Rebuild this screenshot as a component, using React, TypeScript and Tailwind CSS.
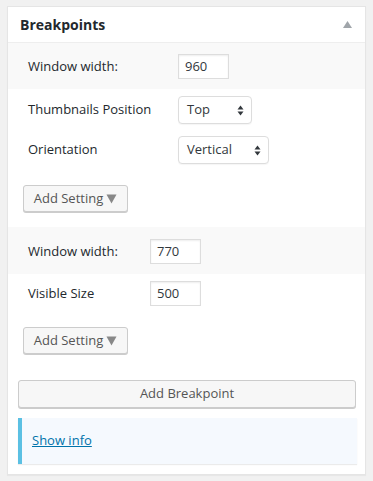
import React from "react";

const font = { fontFamily: '"Open Sans", "Noto Sans", sans-serif' };

const UpDown: React.FC = () => (
  <svg width="7" height="11" viewBox="0 0 7 11" className="shrink-0">
    <path d="M3.5 0.5 L6.5 4.5 H0.5 Z" fill="#32373c" />
    <path d="M3.5 10.5 L6.5 6.5 H0.5 Z" fill="#32373c" />
  </svg>
);

const TextBox: React.FC<{ value: string }> = ({ value }) => (
  <div className="w-[51px] h-[25px] border border-[#dddddd] bg-white shadow-[inset_0_1px_2px_rgba(0,0,0,0.07)] pl-[6px] flex items-center text-[13px] text-[#32373c]">
    {value}
  </div>
);

const SelectBox: React.FC<{ value: string; width: string }> = ({ value, width }) => (
  <div
    className={`${width} h-[28px] border border-[#dddddd] rounded-[4px] bg-white shadow-[0_1px_1px_rgba(0,0,0,0.04)] pl-[8px] pr-[7px] flex items-center justify-between text-[13px] text-[#32373c]`}
  >
    <span>{value}</span>
    <UpDown />
  </div>
);

const AddSetting: React.FC = () => (
  <div className="ml-[15px] w-[105px] h-[27px] border border-[#cccccc] rounded-[3px] bg-[#f7f7f7] shadow-[0_1px_0_#cccccc] flex items-center justify-center gap-[3px] text-[13px] text-[#555555]">
    <span>Add Setting</span>
    <svg width="11" height="10" viewBox="0 0 11 10">
      <path d="M0.5 0.5 H10.5 L5.5 9.5 Z" fill="#888888" />
    </svg>
  </div>
);

const Row: React.FC<{ label: string; labelW: string; children: React.ReactNode }> = ({ label, labelW, children }) => (
  <div className="flex items-center">
    <div className={`${labelW} pl-[20px] text-[13px] text-[#23282d]`}>{label}</div>
    {children}
  </div>
);

export default function App() {
  return (
    <div className="min-h-[481px] bg-[#f1f1f1] pt-[6px] pl-[7px]" style={font}>
      <div className="w-[359px] h-[469px] border border-[#e5e5e5] bg-white shadow-[0_1px_1px_rgba(0,0,0,0.04)]">
        <div className="h-[36px] border-b border-[#eeeeee] flex items-center justify-between pl-[12px] pr-[12px]">
          <span className="text-[14px] font-bold text-[#23282d]">Breakpoints</span>
          <svg width="9" height="7" viewBox="0 0 9 7" className="mr-[1px]">
            <path d="M4.5 0 L9 7 H0 Z" fill="#a0a5aa" />
          </svg>
        </div>

        <div className="bg-[#f9f9f9] pt-[11px] pb-[10px]">
          <Row label="Window width:" labelW="w-[170px]">
            <TextBox value="960" />
          </Row>
        </div>
        <div className="pt-[7px] flex flex-col gap-[12px]">
          <Row label="Thumbnails Position" labelW="w-[170px]">
            <SelectBox value="Top" width="w-[74px]" />
          </Row>
          <Row label="Orientation" labelW="w-[170px]">
            <SelectBox value="Vertical" width="w-[91px]" />
          </Row>
        </div>
        <div className="pt-[21px] pb-[15px]">
          <AddSetting />
        </div>

        <div className="bg-[#f9f9f9] pt-[12px] pb-[10px]">
          <Row label="Window width:" labelW="w-[142px]">
            <TextBox value="770" />
          </Row>
        </div>
        <div className="pt-[7px]">
          <Row label="Visible Size" labelW="w-[142px]">
            <TextBox value="500" />
          </Row>
        </div>
        <div className="pt-[21px]">
          <AddSetting />
        </div>

        <div className="pt-[26px] px-[10px] pr-[9px]">
          <div className="h-[28px] border border-[#cccccc] rounded-[3px] bg-[#f7f7f7] shadow-[0_1px_0_#cccccc] flex items-center justify-center text-[13px] text-[#555555]">
            Add Breakpoint
          </div>
        </div>

        <div className="pt-[10px] pl-[10px] pr-[8px]">
          <div className="h-[46px] border-l-4 border-[#5bc0e3] bg-[#f5f9fe] shadow-[0_1px_1px_rgba(0,0,0,0.08)] flex items-center pl-[10px]">
            <a className="text-[13px] text-[#0073aa] underline">Show info</a>
          </div>
        </div>
      </div>
    </div>
  );
}
